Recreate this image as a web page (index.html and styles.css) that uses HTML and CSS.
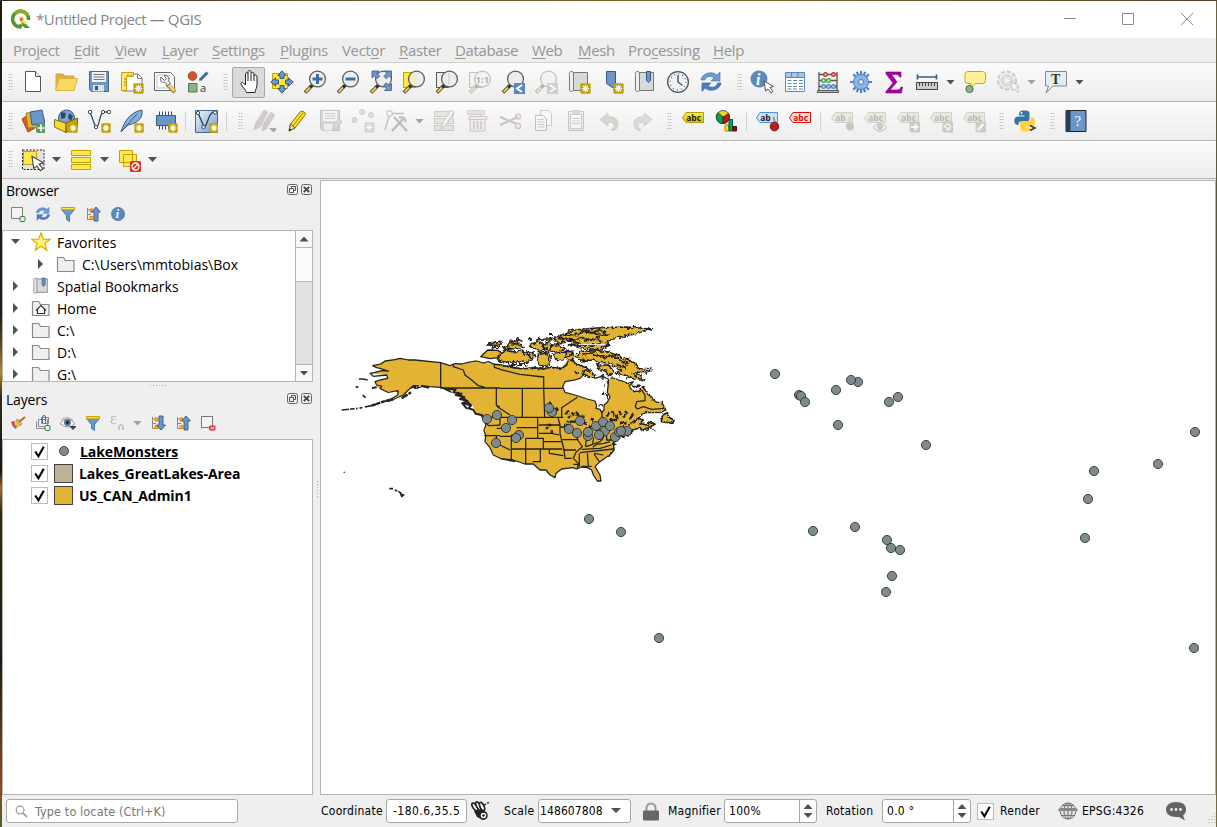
FILE: index.html
```html
<!DOCTYPE html>
<html lang="en">
<head>
<meta charset="utf-8">
<title>*Untitled Project — QGIS</title>
<link rel="stylesheet" href="styles.css">
</head>
<body>
<svg class="defs" width="0" height="0">
<defs>
<linearGradient id="gb" x1="0" y1="0" x2="1" y2="1"><stop offset="0" stop-color="#f5f9fd"/><stop offset="1" stop-color="#6d97c4"/></linearGradient>
<linearGradient id="gy" x1="0" y1="0" x2="0" y2="1"><stop offset="0" stop-color="#fff04d"/><stop offset="1" stop-color="#d8c000"/></linearGradient>
<symbol id="badge" viewBox="0 0 10 10"><rect x=".3" y=".3" width="9.4" height="9.4" rx="1.2" fill="#c4a000"/><path d="M5 1.6v6.8M1.6 5h6.8M2.7 2.7l4.6 4.6M7.3 2.7L2.7 7.3" stroke="#fff" stroke-width="1.1"/></symbol>
<symbol id="lens" viewBox="0 0 24 24"><path d="M2 22.500L10 14.500" stroke="#333" stroke-width="3.600"/><path d="M2.600 22L7 17.500" stroke="#fcce3a" stroke-width="2"/><circle cx="14.500" cy="9" r="7.900" fill="#eceded" stroke="#5c5c5c" stroke-width="1.300"/></symbol>
<symbol id="new" viewBox="0 0 24 24"><path d="M4.500 1.500h10l5 5v15h-15z" fill="#fff" stroke="#555"/><path d="M14.500 1.500v5h5" fill="#eee" stroke="#555"/></symbol>
<symbol id="open" viewBox="0 0 24 24"><path d="M2 20V4h7l2 2h9v4" fill="#dcb13c" stroke="#d5a937"/><path d="M1.500 20.500L5 8.500h18.500l-3.500 12z" fill="#fcd860" stroke="#dcb145"/></symbol>
<symbol id="save" viewBox="0 0 24 24"><path d="M2.500 1.500h19v20H4.500l-2-2z" fill="#6a96c8" stroke="#4a6784"/><path d="M5 2h14v10H5z" fill="#f4f4f4"/><path d="M6.500 4.500h11M6.500 7h11M6.500 9.500h11" stroke="#777"/><path d="M6 15h11v6.500H6z" fill="#dfe3e6"/><path d="M8 16h3v4H8z" fill="#375573"/></symbol>
<symbol id="layout" viewBox="0 0 24 24"><path d="M3 4h15l4 4v13H3z" fill="#fff" stroke="#777"/><path d="M17.500 4v4.500H22" fill="none" stroke="#777"/><path d="M1.500 2.500h12v4h-7v14h-5z" fill="#ffe680" stroke="#c4a000"/><path d="M4 9h2M4 12h2M4 15h2M8 4v2M11 4v2" stroke="#a58500"/><use href="#badge" x="13" y="13" width="11" height="11"/></symbol>
<symbol id="manager" viewBox="0 0 24 24"><path d="M1.500 2.500h16l4 4v14h-20z" fill="#fff" stroke="#666"/><path d="M4 5h12v13H4z" fill="#fff" stroke="#b6c5dc"/><path d="M14 14l8 8" stroke="#a07d20" stroke-width="4"/><path d="M15 14.500l6.500 6.500" stroke="#f6d873" stroke-width="2.500"/><path d="M8 7l3.500 3.500 2-2L11 5.500c3-1 6 2 4.500 5l2 3-3 2-2.500-3C8 13 6.500 10 8 7z" fill="#eee" stroke="#666"/></symbol>
<symbol id="style" viewBox="0 0 24 24"><circle cx="6.500" cy="6" r="4.300" fill="#cb552d" stroke="#ac4823"/><path d="M21.500 2.500L14 10" stroke="#3e6c9d" stroke-width="3"/><path d="M12.500 11l2-3 1.500 1.500z" fill="#3e6c9d"/><path d="M2.500 13.500H11V22H2.500z" fill="#8ab38a" stroke="#4c7c4c"/><text x="14" y="22" class="glyph" font-size="11" fill="#333">a</text></symbol>
<symbol id="hand" viewBox="0 0 24 24"><path d="M8.500 22.500c-1-2.500-3-4.500-5-7.500-1.500-2.500.5-3.500 2-2l2 2V4c0-2 2.500-2 2.500 0V2c0-2 3-2 3 0v1.500c.5-1.500 3-1.500 3 .5v1.500c1-1 3-.5 3 1.500v8c0 3-1.500 4-2 7.500z" fill="#fff" stroke="#222"/><path d="M10 4v7M13 4v7M16 5v6" stroke="#222"/></symbol>
<symbol id="panto" viewBox="0 0 24 24"><path d="M2.500 3.500h15v15h-15z" fill="#ffe736" stroke="#c4a000"/><path d="M12 .8l4.200 4.700h-2.200v3h-4v-3H7.800zM12 23.200l4.200-4.700h-2.200v-3h-4v3H7.800zM.8 12l4.700-4.200V10h3v4h-3v2.200zM23.200 12l-4.700-4.200V10h-3v4h3v2.200z" fill="#6a96c8" stroke="#365c84"/></symbol>
<symbol id="zin" viewBox="0 0 24 24"><use href="#lens" width="24" height="24"/><path d="M14.500 4v10M9.500 9h10" stroke="#3e6c9d" stroke-width="3"/></symbol>
<symbol id="zout" viewBox="0 0 24 24"><use href="#lens" width="24" height="24"/><path d="M9.500 9h10" stroke="#3e6c9d" stroke-width="3"/></symbol>
<symbol id="zfull" viewBox="0 0 24 24"><use href="#lens" width="24" height="24"/><path d="M3 1h7L7.800 3.200l3 3-2.500 2.500-3-3L3 8zM22.500 1v7l-2.200-2.200-3 3-2.500-2.500 3-3L15.500 1zM22.500 20.500h-7l2.200-2.200-3-3 2.500-2.500 3 3 2.300-2.300z" fill="#6a96c8" stroke="#365c84" stroke-width=".8"/></symbol>
<symbol id="zsel" viewBox="0 0 24 24"><path d="M1.500 2.500h12v15h-12z" fill="#ffe93b" stroke="#c4a000"/><use href="#lens" width="24" height="24"/><path d="M14 2.500a7 7 0 0 0 0 13z" fill="#f4efb0"/></symbol>
<symbol id="zlay" viewBox="0 0 24 24"><path d="M1.500 2.500h12v15h-12z" fill="#eee" stroke="#555"/><use href="#lens" width="24" height="24"/><path d="M14 3v12" stroke="#ccc"/></symbol>
<symbol id="znat" viewBox="0 0 24 24"><path d="M1.500 2.500h12v15h-12z" fill="#eee" stroke="#555"/><use href="#lens" width="24" height="24"/><text x="7.500" y="12.500" class="glyph b" font-size="9.500" fill="#222">1:1</text></symbol>
<symbol id="zprev" viewBox="0 0 24 24"><use href="#lens" width="24" height="24"/><path d="M13 13h11v11H13z" fill="#5b89bd"/><path d="M21 15l-5 3.500 5 3.500" fill="none" stroke="#fff" stroke-width="2"/></symbol>
<symbol id="znext" viewBox="0 0 24 24"><use href="#lens" width="24" height="24"/><path d="M13 13h11v11H13z" fill="#888"/><path d="M16 15l5 3.500-5 3.500" fill="none" stroke="#fff" stroke-width="2"/></symbol>
<symbol id="map" viewBox="0 0 24 24"><path d="M5 2.500h15.500v18H5z" fill="#d9d9d9" stroke="#777"/><path d="M5 1.500c-3 0-3 2-2.500 4v14.500c0 2 4 2 4 0V4c0-2-.5-2.500-1.500-2.500z" fill="#eee" stroke="#777"/></symbol>
<symbol id="newmap" viewBox="0 0 24 24"><use href="#map" width="24" height="24"/><use href="#badge" x="13" y="13" width="11" height="11"/></symbol>
<symbol id="newbm" viewBox="0 0 24 24"><path d="M6.500 1.500h9v18l-4.500-3-4.500-3z" fill="#6a96c8" stroke="#365c84"/><use href="#badge" x="13" y="13" width="11" height="11"/></symbol>
<symbol id="bm" viewBox="0 0 24 24"><use href="#map" width="24" height="24"/><path d="M13.500 1.500h4v9l-2 2-2-2z" fill="#6a96c8" stroke="#365c84"/></symbol>
<symbol id="clock" viewBox="0 0 24 24"><circle cx="12" cy="12" r="10.400" fill="#f0f1f2" stroke="#555" stroke-width="1.300"/><circle cx="12" cy="12" r="8" fill="none" stroke="#5080b0" stroke-width="1.500" stroke-dasharray="1 3.190"/><path d="M12 5v7l4.500 3.500" fill="none" stroke="#555" stroke-width="1.500"/></symbol>
<symbol id="refresh" viewBox="0 0 24 24"><path d="M2 10c.5-6 10-10 16-5l3-3v9h-9l3-3c-4-3-9-1-9 2z" fill="#6a9bd3" stroke="#4778b0" stroke-width=".7"/><path d="M22 13c-.5 6-10 10-16 5l-3 3.500V13h9l-3 3c4 2.500 9 1 9.500-3z" fill="#4b7fbb" stroke="#376aa1" stroke-width=".7"/></symbol>
<symbol id="cursor" viewBox="0 0 12 14"><path d="M1 1l1.500 10 2.500-2 3 4 2-1.500-3-4 3.500-1z" fill="#fff" stroke="#444" stroke-width=".9"/></symbol>
<symbol id="ident" viewBox="0 0 24 24"><circle cx="9" cy="9" r="8.500" fill="#5b89bd" /><text x="6" y="14.500" font-size="16" class="ser" fill="#fff">i</text><use href="#cursor" x="13" y="10" width="12" height="14"/></symbol>
<symbol id="table" viewBox="0 0 24 24"><path d="M2.500 2.500h19v19h-19z" fill="#fff" stroke="#5b89bd"/><path d="M3 3h18v4H3z" fill="#a9c5e6"/><path d="M3 7.500h18M8.500 3v4M15 3v4M4.500 10.500h4M10 10.500h4M16 10.500h4M4.500 13.500h4M10 13.500h4M16 13.500h4M4.500 16.500h4M10 16.500h4M16 16.500h4M4.500 19h4M10 19h4M16 19h4" stroke="#5b89bd"/></symbol>
<symbol id="abacus" viewBox="0 0 24 24"><path d="M3 2v19M21 2v19M3 4.500h18M3 10.500h18M3 16.500h18" stroke="#555" stroke-width="1.300"/><path d="M1.500 20.500h21v2h-21z" fill="#bbb" stroke="#555"/><g stroke-width="1.200"><g fill="#f5a3a3" stroke="#c32f2f"><circle cx="9.500" cy="4.500" r="1.900"/><circle cx="17.500" cy="4.500" r="1.900"/></g><g fill="#c1edc1" stroke="#3ca03c"><circle cx="7.500" cy="10.500" r="1.900"/><circle cx="12.500" cy="10.500" r="1.900"/></g><g fill="#b5d0ef" stroke="#4a80b8"><circle cx="7.500" cy="16.500" r="1.900"/><circle cx="12.500" cy="16.500" r="1.900"/><circle cx="17.500" cy="16.500" r="1.900"/></g></g></symbol>
<symbol id="gear" viewBox="0 0 24 24"><path d="M12 1v22M1 12h22M4.200 4.200l15.600 15.600M19.800 4.200L4.200 19.800M7.800 1.800l8.400 20.400M16.200 1.800L7.800 22.200" stroke="#4a84c8" stroke-width="2.200"/><circle cx="12" cy="12" r="7.500" fill="#8db4e4" stroke="#4a84c8"/><circle cx="12" cy="12" r="2.500" fill="#eee" stroke="#3c78bc"/></symbol>
<symbol id="sigma" viewBox="0 0 24 24"><path d="M4 2h15v5h-1.500c-.5-2-1.500-2.500-4-2.500H9.500l5.500 7.500-7 8h7c2.500 0 3.500-1 4-3h1.500l-1 6H4v-1.500l7-8.500L4 4z" fill="#a500a5" stroke="#820082" stroke-width=".6"/></symbol>
<symbol id="ruler" viewBox="0 0 24 24"><path d="M2 7h20M2.500 4.500v5M21.500 4.500v5" stroke="#3a5f85" stroke-width="1.700"/><path d="M1.500 12.500h21v7h-21z" fill="#ccc" stroke="#444"/><path d="M4.500 13v3M7.500 13v3M10.500 13v3M13.500 13v3M16.500 13v3M19.500 13v3" stroke="#444"/></symbol>
<symbol id="tip" viewBox="0 0 24 24"><path d="M5 1.500h14.500q3 0 3 3v6q0 3-3 3H12L6.500 20 8 13.500H5q-3 0-3-3v-6q0-3 3-3z" fill="#fdf19a" stroke="#cba700"/><circle cx="6.500" cy="19" r="3.600" fill="#88b588" stroke="#446a44"/></symbol>
<symbol id="action" viewBox="0 0 24 24"><circle cx="11" cy="10.500" r="9" fill="#ddd" stroke="#777" stroke-width="2" stroke-dasharray="4 2"/><circle cx="11" cy="10.500" r="5.500" fill="#bbb" stroke="#777"/><path d="M9.500 8l4.500 2.500-4.500 2.500z" fill="#fff"/><use href="#cursor" x="14" y="10" width="11" height="14"/></symbol>
<symbol id="textnote" viewBox="0 0 24 24"><path d="M1.500 1.500h21v14.500H9l-7 7 2.500-7h-3z" fill="#e6eef1" stroke="#888"/><text x="7" y="13.500" class="ser2 b" font-size="14" fill="#333">T</text></symbol>
<symbol id="dsm" viewBox="0 0 24 24"><path d="M1 10l6-4 7 13-7 4z" fill="#d95e20" stroke="#a84312"/><path d="M5 4l11-1v15l-9 1z" fill="#e5b53a" stroke="#b08319"/><path d="M9 3l12-2 3 13-13 2z" fill="#6a96c8" stroke="#365c84"/><rect x="15" y="14" width="10" height="10" rx="2" fill="#5a9960"/><path d="M20 15.500v7M16.500 19h7" stroke="#fff" stroke-width="1.700"/></symbol>
<symbol id="gpkg" viewBox="0 0 24 24"><circle cx="12.500" cy="9" r="8" fill="#7fa6d3" stroke="#36587e"/><path d="M7 3l5 1-1 5-4 1zM15 4l4 3-2 5-3-3z" fill="#2d4866"/><path d="M.5 10.500L12 14v9.500L.5 18z" fill="#f8dc2d" stroke="#5e4c00" stroke-width=".8"/><path d="M12 14l11.500-5v9L12 23.500z" fill="#d2a800" stroke="#5e4c00" stroke-width=".8"/><use href="#badge" x="14" y="14" width="10" height="10"/></symbol>
<symbol id="vec" viewBox="0 0 24 24"><path d="M3 3l6 16c4-1 3-16 8-16h4" fill="none" stroke="#34495e" stroke-width="1.300"/><g fill="#fff" stroke="#34495e"><circle cx="3" cy="3" r="1.700"/><circle cx="9" cy="18" r="1.700"/><circle cx="16" cy="3" r="1.700"/><circle cx="22" cy="3" r="1.700"/></g></symbol>
<symbol id="newvec" viewBox="0 0 24 24"><use href="#vec" width="24" height="24"/><use href="#badge" x="14" y="14" width="10" height="10"/></symbol>
<symbol id="feather" viewBox="0 0 24 24"><path d="M1 23C4 13 10 3 22 1c1 7-3 13-14 15z" fill="#84afd8" stroke="#365c84"/><path d="M1 23L17 5" stroke="#365c84"/><use href="#badge" x="14" y="14" width="10" height="10"/></symbol>
<symbol id="chip" viewBox="0 0 24 24"><path d="M5.500 2.500v18M8.500 2.500v18M11.500 2.500v18M14.500 2.500v18M17.500 2.500v18" stroke="#2e4d70"/><path d="M2.500 6.500h19v10h-19z" fill="#6a96c8" stroke="#365c84"/><use href="#badge" x="14" y="14" width="10" height="10"/></symbol>
<symbol id="virt" viewBox="0 0 24 24"><path d="M1.500 1.500h22v22h-22z" fill="url(#gb)" stroke="#46698f"/><path d="M4 4l6 14c4-1 4-15 10-15" fill="none" stroke="#2d4866" stroke-width="1.400"/><g fill="#fff" stroke="#2d4866"><circle cx="4" cy="4" r="1.700"/><circle cx="9.500" cy="18" r="1.700"/><circle cx="21" cy="3.500" r="1.700"/></g><use href="#badge" x="15" y="14" width="10" height="10"/></symbol>
<symbol id="pencil" viewBox="0 0 24 24"><path d="M4 22l1.500-7L15.500 2.500q4-1 5 3L10 19z" fill="#f8dc2d" stroke="#8c7400"/><path d="M8 17L18 4" stroke="#a58a00"/><path d="M4 22l1.500-7 4.500 4z" fill="#eee2a0" stroke="#555"/><path d="M4 22l.8-2.500 1.500 1z" fill="#111"/></symbol>
<symbol id="pencils" viewBox="0 0 24 24"><path d="M2 21l1.500-7L12 1l4 2-8 15zM10 22l1-7L19 3l4 3-9 14z" fill="#8c7777" stroke="#8b8585"/><path d="M17 19h9l-4.500 4.500z" fill="#111"/></symbol>
<symbol id="saveed" viewBox="0 0 24 24"><path d="M2.500 1.500h19v20H4.500l-2-2z" fill="#999" stroke="#666"/><path d="M5 2h14v10H5z" fill="#f4f4f4"/><path d="M6.500 4.500h11M6.500 7h11M6.500 9.500h11" stroke="#777"/><path d="M6 15h9v6.500H6z" fill="#dfe3e6"/><path d="M14 22l2-7 6-5 2 3-6 7z" fill="#b99" stroke="#777"/></symbol>
<symbol id="points" viewBox="0 0 24 24"><g fill="#aaa" stroke="#777"><circle cx="3.500" cy="11" r="2.500"/><circle cx="11" cy="3" r="2.500"/><circle cx="20" cy="6" r="2.500"/></g><rect x="13.500" y="13.500" width="10" height="10" rx="1" fill="#999"/><path d="M18.500 15v7M15 18.500h7M16 16l5 5M21 16l-5 5" stroke="#fff"/></symbol>
<symbol id="vertex" viewBox="0 0 24 24"><path d="M5.500 6L1 21M6 4.500h14" stroke="#555" stroke-width="1.300"/><path d="M3 2h5v5H3z" fill="#fff" stroke="#555"/><path d="M8 22L20 9M10 8l13 14M15 8l5 1 2 4" fill="none" stroke="#555" stroke-width="2.500"/></symbol>
<symbol id="attr" viewBox="0 0 24 24"><path d="M2.500 2.500h19v5h-19zM2.500 9.500h19v5h-19zM2.500 16.500h19v5h-19z" fill="#ccc9a4" stroke="#777"/><path d="M9 20l2-7 8-12 3 2-8 13z" fill="#eee" stroke="#666"/></symbol>
<symbol id="trash" viewBox="0 0 24 24"><path d="M2.500 1.500h17v4h-17z" fill="#c8b8a8" stroke="#888"/><path d="M5 10.500h15v11.500H5zM4 7.500h18v3H4zM10 5.500h6v2" fill="#ddd" stroke="#906464"/><path d="M9 12v8M12.500 12v8M16 12v8" stroke="#906464" stroke-width="1.500"/></symbol>
<symbol id="cut" viewBox="0 0 24 24"><path d="M2 8l17 7M2 16L20 8" stroke="#666" stroke-width="2"/><circle cx="20" cy="7.500" r="2.500" fill="none" stroke="#966" stroke-width="1.500"/><circle cx="20" cy="17" r="2.500" fill="none" stroke="#966" stroke-width="1.500"/></symbol>
<symbol id="copy" viewBox="0 0 24 24"><path d="M9.500 1.500h8l3 3v12h-11z" fill="#fff" stroke="#777"/><path d="M4.500 6.500h8l3 3v12h-11z" fill="#fff" stroke="#555"/><path d="M6.500 10.500h6M6.500 13h7M6.500 15.500h7M6.500 18h7" stroke="#777"/></symbol>
<symbol id="paste" viewBox="0 0 24 24"><path d="M4.500 2.500h15v19h-15z" fill="#ddd" stroke="#666"/><path d="M6.500 5.500h11v14h-11z" fill="#fff" stroke="#777"/><path d="M8.500 1h7v4h-7z" fill="#999"/><path d="M8 9.500h8M8 12h8M8 14.500h8" stroke="#777"/></symbol>
<symbol id="undo" viewBox="0 0 24 24"><path d="M11 4v4c8-1 12 4 9 11-1 2-4 3-6 2 4-2 5-8-3-8v4L3 10.500z" fill="#a69384" stroke="#8d7c70"/></symbol>
<symbol id="redo" viewBox="0 0 24 24"><path d="M14 4v4C6 7 2 12 5 19c1 2 4 3 6 2-4-2-5-8 3-8v4l8-6.500z" fill="#9fa99a" stroke="#7d8b7b"/></symbol>
<symbol id="lab" viewBox="0 0 24 24"><path d="M1.500 9L5 3.500h17.500v10H5z" fill="url(#gy)" stroke="#b59b00"/><text x="5.200" y="11.500" class="glyph b" font-size="8.500" fill="#222">abc</text></symbol>
<symbol id="diagram" viewBox="0 0 24 24"><circle cx="8" cy="8" r="6.500" fill="#f2d817" stroke="#222" stroke-width=".7"/><path d="M8 8L3 3.500A6.500 6.500 0 0 0 8 14.500z" fill="#00a843" stroke="#222" stroke-width=".7"/><path d="M8 8l5.500-3.500A6.500 6.500 0 0 1 8 14.500z" fill="#c31616" stroke="#222" stroke-width=".7"/><path d="M10 16h3.500v6H10z" fill="#fddd00" stroke="#b98e00"/><path d="M14 10.500h3.500V22H14z" fill="#00a843" stroke="#055"/><path d="M18 17.500h3.500V22H18z" fill="#a00" stroke="#600"/></symbol>
<symbol id="labpin" viewBox="0 0 24 24"><path d="M1.500 9L5 3.500h17.500v10H5z" fill="#cfe3f8" stroke="#4e93da"/><text x="5.200" y="11.500" class="glyph b" font-size="8.500" fill="#222">ab</text><path d="M18.500 8l1.500 6" stroke="#999" stroke-width="2"/><circle cx="19.500" cy="17.500" r="4.300" fill="#b02323" stroke="#7c1212"/></symbol>
<symbol id="labred" viewBox="0 0 24 24"><path d="M1.500 9L5 3.500h17.500v10H5z" fill="#ffe6e6" stroke="#f00000"/><text x="5.200" y="11.500" class="glyph b" font-size="8.500" fill="#f00000">abc</text></symbol>
<symbol id="labg" viewBox="0 0 24 24"><path d="M1.500 9L5 3.500h17.500v10H5z" fill="#cfcfae" stroke="#888872"/><text x="5.200" y="11.500" class="glyph b" font-size="8.500" fill="#333">abc</text></symbol>
<symbol id="lg1" viewBox="0 0 24 24"><path d="M1.500 9L5 3.500h17.500v10H5z" fill="#cfcfae" stroke="#888872"/><text x="5.200" y="11.500" class="glyph b" font-size="8.500" fill="#333">ab</text><path d="M19.500 8v7" stroke="#999" stroke-width="2.500"/><circle cx="20" cy="17.500" r="4" fill="#8d6464"/></symbol>
<symbol id="lg2" viewBox="0 0 24 24"><use href="#labg" width="24" height="24"/><path d="M10 18.500q7-8 14 0q-7 8-14 0z" fill="#eee" stroke="#555"/><circle cx="17" cy="18" r="3" fill="#777"/></symbol>
<symbol id="lg3" viewBox="0 0 24 24"><use href="#labg" width="24" height="24"/><rect x="13.500" y="12.500" width="11" height="11" rx="2" fill="#777"/><path d="M15 18h6M18.500 15l3 3-3 3" stroke="#fff" stroke-width="2" fill="none"/></symbol>
<symbol id="lg4" viewBox="0 0 24 24"><use href="#labg" width="24" height="24"/><rect x="13.500" y="12.500" width="11" height="11" rx="2" fill="#777"/><path d="M16 19c-1-5 6-5 5.500-1-.5 2-2 3-3 3M18 18v3.500" stroke="#fff" stroke-width="1.500" fill="none"/></symbol>
<symbol id="lg5" viewBox="0 0 24 24"><use href="#labg" width="24" height="24"/><rect x="13.500" y="12.500" width="11" height="11" rx="2" fill="#888064"/><path d="M15.500 21.500l6-6.500" stroke="#fff" stroke-width="2.500"/></symbol>
<symbol id="py" viewBox="0 0 24 24"><path d="M6 6.500c0-3 0-5 5.500-5s5 2 5 4v4c0 2-1 3-3 3H8c-2 0-2.500 1-2.500 3.500C2 16 1 14 1.500 10.500 2 8 3.500 7.500 6 7.500h5.500v-1z" fill="#3774a6"/><path d="M18 8c3 0 4 2 4 5s-1.500 4.500-4 4.500h-5.500v1h5c0 2.500-1 4-5 4s-5.500-2-5.500-4v-4c0-1.500 1-2.500 3-2.500h5.500c2 0 2.500-1 2.500-4z" fill="#ffd43b"/><circle cx="8.500" cy="4" r="1" fill="#fff"/><path d="M17 16.500l5 2.500-5 2.500" fill="none" stroke="#333" stroke-width="1.500"/></symbol>
<symbol id="book" viewBox="0 0 24 24"><path d="M2 1.500h20v21H2z" fill="#6a96c8" stroke="#222"/><path d="M2 1.500h4.500v21H2z" fill="#2b3e50"/><text x="10.500" y="17" class="ser2" font-size="15" fill="#fff">?</text></symbol>
<symbol id="selrect" viewBox="0 0 24 24"><path d="M1.500 2h21.500v19.500H1.500z" fill="#e2e2e2" stroke="#222" stroke-dasharray="2 1.500"/><path d="M2.500 3.500h13v13h-13z" fill="#ffe94f" stroke="#c4a000"/><use href="#cursor" x="9" y="7" width="16" height="17"/></symbol>
<symbol id="selall" viewBox="0 0 24 24"><path d="M2.500 2.500h19v5h-19zM2.500 9.500h19v5h-19zM2.500 16.500h19v5h-19z" fill="#fce94f" stroke="#c4a000"/></symbol>
<symbol id="desel" viewBox="0 0 24 24"><path d="M2.500 2.500h13v12h-13zM6.500 6.500h13v12h-13z" fill="#fce94f" stroke="#c4a000"/><rect x="13" y="13" width="11" height="11" rx="1.500" fill="#d83232"/><circle cx="18.500" cy="18.500" r="3.500" fill="none" stroke="#fff" stroke-width="1.300"/><path d="M16 21l5-5" stroke="#fff" stroke-width="1.300"/></symbol>
<symbol id="restore" viewBox="0 0 11 11"><rect x=".5" y=".5" width="10" height="10" rx="2" fill="none" stroke="#666"/><path d="M2.500 4.500h4v4h-4zM4.500 4.500v-2h4v4h-2" fill="none" stroke="#555"/></symbol>
<symbol id="close" viewBox="0 0 11 11"><rect x=".5" y=".5" width="10" height="10" rx="2" fill="none" stroke="#666"/><path d="M2.800 2.800l5.400 5.400M8.200 2.800L2.800 8.200" stroke="#444" stroke-width="1.900"/></symbol>
<symbol id="addl" viewBox="0 0 16 16"><path d="M1.500 1.500h11v11h-11z" fill="#f3f3f3" stroke="#7b837b"/><rect x="10" y="10.500" width="5" height="5" rx="1" fill="#ddf0dd" stroke="#3f8043"/></symbol>
<symbol id="funnel" viewBox="0 0 16 16"><path d="M1.500 3.500h13l-5 6v6l-3-2v-4z" fill="#6a96c8" stroke="#4779ad"/><path d="M1.500 1.500h13v2.300h-13z" fill="#fce94f" stroke="#c4a000"/></symbol>
<symbol id="tree" viewBox="0 0 16 16"><path d="M2.500 2v11.500H6M2.500 4H6M2.500 8.500H6" fill="none" stroke="#888"/><path d="M5 3h3v3H5zM5 10.500h3v3H5z" fill="#ffae42" stroke="#f08010"/></symbol>
<symbol id="treeup" viewBox="0 0 16 16"><use href="#tree" width="16" height="16"/><path d="M11 1l4.500 5H13v9H9V6H6.500z" fill="#6a96c8" stroke="#365c84" stroke-width=".9"/></symbol>
<symbol id="treedn" viewBox="0 0 16 16"><use href="#tree" width="16" height="16"/><path d="M11 15l4.500-5H13V1H9v9H6.500z" fill="#6a96c8" stroke="#365c84" stroke-width=".9"/></symbol>
<symbol id="info" viewBox="0 0 16 16"><circle cx="8" cy="8" r="6.700" fill="#5b89bd" stroke="#3f6fa5" stroke-width=".5"/><text x="5.800" y="12.200" font-size="12" class="ser" fill="#fff">i</text></symbol>
<symbol id="fold" viewBox="0 0 20 18"><path d="M1.500 16.500v-14h6l2 3h8.500v11z" fill="#efefef" stroke="#8a8a8a" stroke-width="1.200"/></symbol>
<symbol id="homef" viewBox="0 0 20 18"><use href="#fold" width="20" height="18"/><path d="M5 11.500l5-5 5 5M6.500 10.500v4h7v-4" fill="#fff" stroke="#333" stroke-width="1.200"/></symbol>
<symbol id="star" viewBox="0 0 20 20"><path d="M10 .8l2.300 6.400 7 .1-5.500 4.200 2 6.700L10 14.200l-5.800 4 2-6.700L.7 7.300l7-.1z" fill="#fff27a" stroke="#d4b100" stroke-width="1.200"/></symbol>
<symbol id="brush" viewBox="0 0 16 16"><path d="M1 7l6-2 4 5-5 4z" fill="#f8c840"/><path d="M1 7l3-1 2 8-3-2z" fill="#e84040"/><path d="M3 11l4-1-1 4z" fill="#4a8ad8"/><path d="M6 5l2-1 4 5-2 2z" fill="#e8c690" stroke="#a5712c" stroke-width=".7"/><path d="M9 7l6-5" stroke="#b06b1a" stroke-width="2"/></symbol>
<symbol id="group" viewBox="0 0 16 16"><path d="M1.500 6.500v7h10M3.500 4.500v7h9v-7zM6.500 2.500v6h7v-6z" fill="none" stroke="#888"/><path d="M7.500 8V2a1.500 1.500 0 0 1 3 0v7" fill="none" stroke="#44719d"/><rect x="10" y="10.500" width="5" height="5" rx="1" fill="#ddf0dd" stroke="#3f8043"/></symbol>
<symbol id="eye" viewBox="0 0 16 16"><path d="M0 8.500q7-9 15 0q-7 7-15 0z" fill="#f6f6f6" stroke="#999"/><path d="M1 5q6-5 12 0" fill="none" stroke="#aaa"/><circle cx="7.500" cy="7.500" r="3.400" fill="#4a729c"/><circle cx="7.500" cy="7.500" r="1.300" fill="#111"/><path d="M9 11h8l-4 4z" fill="#444"/></symbol>
<symbol id="eps" viewBox="0 0 16 16"><text x="0" y="9" class="ser2" font-size="16" fill="#444">ε</text><path d="M8 15v-4q3-4 6 0v4h-2v-4h-2v4z" fill="#777"/></symbol>
<symbol id="reml" viewBox="0 0 16 16"><path d="M1.500 1.500h11v11h-11z" fill="#f3f3f3" stroke="#777"/><rect x="9" y="10.500" width="6.500" height="5" rx="1" fill="#e04545"/><path d="M10.500 13h3.500" stroke="#fff"/></symbol>
<symbol id="check" viewBox="0 0 16 16"><path d="M.5.5h15v15H.5z" fill="#fff" stroke="#bcbcbc"/><path d="M4 8l3 4.500L12 3.500" fill="none" stroke="#000" stroke-width="2"/></symbol>
</defs>
</svg>
<div class="window">
  <header class="titlebar">
    <svg class="logo" viewBox="0 0 20 20"><path d="M10.500 15.500l-1.500 2.500A8 8 0 1 1 17.500 11" fill="none" stroke="#589632" stroke-width="3.600"/><path d="M4 5a8 8 0 0 1 13 2" fill="none" stroke="#8cb02c" stroke-width="3.600"/><path d="M11 11l8 8h-5.500L10.500 15z" fill="#589632"/><path d="M8.500 8.500h4l-.5 4h-3z" fill="#ee7913"/><path d="M11.500 11.500l3 3" stroke="#f0e64a" stroke-width="2.500"/></svg>
    <span class="title">*Untitled Project — QGIS</span>
    <svg class="controls" viewBox="0 0 140 20"><path d="M1 9.500h12M59.500 4.500h11v11h-11zM118 4l12 12M130 4l-12 12" fill="none" stroke="#8c8c8c"/></svg>
  </header>
  <nav class="menu">
    <span>Pro<u>j</u>ect</span><span><u>E</u>dit</span><span><u>V</u>iew</span><span><u>L</u>ayer</span><span><u>S</u>ettings</span><span><u>P</u>lugins</span><span>Vect<u>o</u>r</span><span><u>R</u>aster</span><span><u>D</u>atabase</span><span><u>W</u>eb</span><span><u>M</u>esh</span><span>Pro<u>c</u>essing</span><span><u>H</u>elp</span>
  </nav>
  <div class="toolbar">
    <i class="grip"></i>
    <b class="btn"><svg><use href="#new"/></svg></b><b class="btn"><svg><use href="#open"/></svg></b><b class="btn"><svg><use href="#save"/></svg></b><b class="btn"><svg><use href="#layout"/></svg></b><b class="btn"><svg><use href="#manager"/></svg></b><b class="btn"><svg><use href="#style"/></svg></b>
    <i class="grip mid"></i>
    <b class="btn on"><svg><use href="#hand"/></svg></b><b class="btn"><svg><use href="#panto"/></svg></b><b class="btn"><svg><use href="#zin"/></svg></b><b class="btn"><svg><use href="#zout"/></svg></b><b class="btn"><svg><use href="#zfull"/></svg></b><b class="btn"><svg><use href="#zsel"/></svg></b><b class="btn"><svg><use href="#zlay"/></svg></b><b class="btn off"><svg><use href="#znat"/></svg></b><b class="btn"><svg><use href="#zprev"/></svg></b><b class="btn off"><svg><use href="#znext"/></svg></b><b class="btn"><svg><use href="#newmap"/></svg></b><b class="btn"><svg><use href="#newbm"/></svg></b><b class="btn"><svg><use href="#bm"/></svg></b><b class="btn"><svg><use href="#clock"/></svg></b><b class="btn"><svg><use href="#refresh"/></svg></b>
    <i class="grip tight"></i>
    <b class="btn"><svg><use href="#ident"/></svg></b><b class="btn"><svg><use href="#table"/></svg></b><b class="btn"><svg><use href="#abacus"/></svg></b><b class="btn"><svg><use href="#gear"/></svg></b><b class="btn"><svg><use href="#sigma"/></svg></b><b class="btn"><svg><use href="#ruler"/></svg></b><i class="drop"></i><b class="btn"><svg><use href="#tip"/></svg></b><b class="btn off"><svg><use href="#action"/></svg></b><i class="drop off"></i><b class="btn"><svg><use href="#textnote"/></svg></b><i class="drop"></i>
  </div>
  <div class="toolbar">
    <i class="grip"></i>
    <b class="btn"><svg><use href="#dsm"/></svg></b><b class="btn"><svg><use href="#gpkg"/></svg></b><b class="btn"><svg><use href="#newvec"/></svg></b><b class="btn"><svg><use href="#feather"/></svg></b><b class="btn chip"><svg><use href="#chip"/></svg></b><i class="sep"></i><b class="btn"><svg><use href="#virt"/></svg></b><i class="sep"></i>
    <i class="grip edit"></i>
    <b class="btn off"><svg><use href="#pencils"/></svg></b><b class="btn"><svg><use href="#pencil"/></svg></b><b class="btn off"><svg><use href="#saveed"/></svg></b><b class="btn off"><svg><use href="#points"/></svg></b><b class="btn off"><svg><use href="#vertex"/></svg></b><i class="drop off"></i><b class="btn off"><svg><use href="#attr"/></svg></b><b class="btn off"><svg><use href="#trash"/></svg></b><b class="btn off"><svg><use href="#cut"/></svg></b><b class="btn off"><svg><use href="#copy"/></svg></b><b class="btn off"><svg><use href="#paste"/></svg></b><b class="btn off"><svg><use href="#undo"/></svg></b><b class="btn off"><svg><use href="#redo"/></svg></b>
    <i class="grip label"></i>
    <b class="btn"><svg><use href="#lab"/></svg></b><b class="btn chart"><svg><use href="#diagram"/></svg></b><i class="sep"></i><b class="btn"><svg><use href="#labpin"/></svg></b><b class="btn"><svg><use href="#labred"/></svg></b><i class="sep wide"></i><b class="btn off"><svg><use href="#lg1"/></svg></b><b class="btn off"><svg><use href="#lg2"/></svg></b><b class="btn off"><svg><use href="#lg3"/></svg></b><b class="btn off"><svg><use href="#lg4"/></svg></b><b class="btn off"><svg><use href="#lg5"/></svg></b>
    <i class="grip plug"></i><b class="btn"><svg><use href="#py"/></svg></b><i class="grip plug"></i><b class="btn"><svg><use href="#book"/></svg></b>
  </div>
  <div class="toolbar last">
    <i class="grip"></i>
    <b class="btn"><svg><use href="#selrect"/></svg></b><i class="drop"></i><b class="btn"><svg><use href="#selall"/></svg></b><i class="drop"></i><b class="btn"><svg><use href="#desel"/></svg></b><i class="drop"></i>
  </div>
  <main class="work">
    <aside class="docks">
      <section class="dock browser">
        <div class="dock-title"><span>Browser</span><svg><use href="#restore"/></svg><svg><use href="#close"/></svg></div>
        <div class="dock-tools"><svg><use href="#addl"/></svg><svg><use href="#refresh"/></svg><svg><use href="#funnel"/></svg><svg><use href="#treeup"/></svg><svg><use href="#info"/></svg></div>
        <div class="tree">
          <ul>
            <li><i class="tw open"></i><svg class="star"><use href="#star"/></svg><span>Favorites</span></li>
            <li class="child"><i class="tw"></i><svg><use href="#fold"/></svg><span class="path">C:\Users\mmtobias\Box</span></li>
            <li><i class="tw"></i><svg><use href="#bm"/></svg><span>Spatial Bookmarks</span></li>
            <li><i class="tw"></i><svg><use href="#homef"/></svg><span>Home</span></li>
            <li><i class="tw"></i><svg><use href="#fold"/></svg><span>C:\</span></li>
            <li><i class="tw"></i><svg><use href="#fold"/></svg><span>D:\</span></li>
            <li><i class="tw"></i><svg><use href="#fold"/></svg><span>G:\</span></li>
          </ul>
          <div class="scroll"><i class="up"></i><i class="thumb"></i><i class="down"></i></div>
        </div>
      </section>
      <div class="split"></div>
      <section class="dock layers">
        <div class="dock-title"><span>Layers</span><svg><use href="#restore"/></svg><svg><use href="#close"/></svg></div>
        <div class="dock-tools"><svg><use href="#brush"/></svg><svg><use href="#group"/></svg><svg><use href="#eye"/></svg><svg><use href="#funnel"/></svg><svg class="dim"><use href="#eps"/></svg><i class="drop off"></i><svg><use href="#treedn"/></svg><svg><use href="#treeup"/></svg><svg><use href="#reml"/></svg></div>
        <div class="layer-list">
          <div class="layer"><svg class="ck"><use href="#check"/></svg><i class="swatch dot"></i><u>LakeMonsters</u></div>
          <div class="layer"><svg class="ck"><use href="#check"/></svg><i class="swatch lakes"></i><span>Lakes_GreatLakes-Area</span></div>
          <div class="layer"><svg class="ck"><use href="#check"/></svg><i class="swatch admin"></i><span>US_CAN_Admin1</span></div>
        </div>
      </section>
    </aside>
    <div class="vsplit"></div>
    <svg class="canvas" viewBox="321 181 894 613">
      <defs>
        <filter id="rough" x="-5%" y="-5%" width="110%" height="110%"><feTurbulence type="fractalNoise" baseFrequency=".12" numOctaves="2" seed="4"/><feDisplacementMap in="SourceGraphic" scale="9" xChannelSelector="R" yChannelSelector="G"/></filter>
        <filter id="craggy" x="-5%" y="-5%" width="110%" height="110%"><feTurbulence type="fractalNoise" baseFrequency=".08" numOctaves="3" seed="9"/><feDisplacementMap in="SourceGraphic" scale="18" xChannelSelector="R" yChannelSelector="G"/></filter>
      </defs>
      <!-- western half: Alaska, Yukon, BC, west coast -->
      <g transform="translate(335 315) scale(.33333)" stroke-linejoin="round">
        <path fill="#e3b333" d="M113 152L150 138 195 130 240 135 317 143 345 152 380 147 425 140 475 147 497 148 535 158H541V440L500 432 480 422 465 398 450 375 452 330 455 318 425 295 412 270 380 240 350 225 317 217 285 215 250 212 225 222 205 240 150 258 190 240 182 228 150 228 125 215 120 200 158 190 155 180 105 175 130 168 160 168z"/>
        <g fill="none" stroke="#232323" stroke-width="3.800">
          <path d="M541 158L497 150 475 147 460 140 445 144 425 138 400 142 380 147 360 146 345 152 317 143 240 135 220 135 195 130 180 134 150 138 138 147 113 152 125 158 135 160 160 168 140 167 120 172 105 175 115 184 155 180 158 190 140 194 120 200 125 210 140 213 135 220 150 228 160 232 182 228 190 228 188 240 172 250 150 258 165 258 205 240 220 225 235 212 250 212 245 220 265 213 285 215 317 217 345 226M450 315L452 332 447 345 452 362 450 380 465 398 475 420 500 432 541 440"/>
          <path d="M317 143V219H541M355 148V155L385 165 390 180 410 195 430 212 450 217M478 147V157L541 176M484 220V270L528 297M440 307H541M453 325L462 332 505 330M508 307V362M448 362H541M484 362V375L527 415M530 362V437M325 220L350 232"/>
          <path stroke-width="6" d="M340 222L362 224 355 232 380 236 362 240 388 246 375 252 398 258 385 264 408 272 400 280 415 284 422 296 440 300 450 310M380 262L396 282M368 232L410 272M125 217l-14 2M228 218l12-4 0 8M258 212l24 6"/>
          <path stroke-width="7" d="M110 272L150 258 175 253M200 250L212 240M208 245L228 232" stroke-dasharray="12 3"/>
          <path stroke-width="5" stroke-dasharray="22 4 13 4 5 6 9 7" d="M20 285L70 280 110 272 140 262"/>
          <path stroke-width="5" d="M72 192h12l14 3M62 215l8 2M83 240l9 8M163 521h11M179 525l8 3M190 529l9 6M28 470v3"/><path d="M196 536l11 4-7 5z" fill="#5f5536"/>
        </g>
        <path d="M437 125L458 105 488 106 508 118 490 128 466 131z" fill="#e3b333" stroke="#232323" stroke-width="4"/>
      </g>
      <g transform="translate(500 315) scale(.33333)" stroke-linejoin="round">
        <path fill="#e3b333" d="M0 150L70 160 130 158 185 160 200 138 215 130 225 145 250 155 275 180 250 185 225 195 195 200 188 215 195 232 225 240 262 252 285 258 290 272 300 283 305 292 312 285 312 270 322 262 330 245 322 232 325 205 330 187 350 192 385 205 396 201 388 215 400 230 418 228 428 215 445 240 470 262 485 262 498 285 480 293 440 292 420 300 405 315 400 325 415 310 430 315 420 325 440 330 452 324 465 328 445 338 425 345 418 338 400 345 395 355 375 362 358 368 340 378 338 395 342 405 320 425 300 440 285 455 300 480 303 498 292 498 280 480 275 465 262 458 245 456 230 462 218 458 200 460 185 462 168 475 165 488 150 480 138 465 120 465 100 447 75 447 40 435 0 430z"/>
        <g fill="none" stroke="#232323" stroke-width="3.800">
          <g filter="url(#rough)">
            <path stroke-width="5" d="M0 150L40 158 70 162 100 158 130 162 150 157 185 160 200 150 205 138 215 130 225 145 250 155 262 160 275 180"/>
            <path stroke-width="5" d="M400 325L415 310 430 315 420 325 440 330 452 320 465 328 445 338 425 345 418 338 400 345 385 362 358 368 350 378 340 382 342 405 325 425"/>
            <path d="M330 187L350 192 385 205 400 200 388 215 400 230 418 228 428 215 445 240 455 245 460 255 470 262 485 262 498 285 480 293 440 292 425 298 420 305 405 315 385 330"/>
          </g>
          <!-- Hudson Bay and James Bay -->
          <path fill="#fff" d="M252 178L240 190 225 195 195 200 188 215 195 232 225 240 262 252 285 258 290 272 288 280 300 283 305 292 312 285 312 270 322 262 330 245 322 232 325 205 325 192 305 184 285 190 275 182z"/>
          <path d="M325 422L300 440 285 455 300 480 303 498 292 498 280 480 275 465 262 458 245 456 230 462 218 458 200 460 185 462 168 475 165 488 150 480 138 465 120 465 100 447 75 447 40 435 0 430"/>
          <path d="M0 220H188M131 220V186L60 178 0 163M67 220V307M131 220L134 307M-55 307H190M185 307V278L232 247M306 290V325M425 225L435 240V257L410 260 406 275 412 282 430 275 455 283 492 280M0 297V330M-10 274L30 300"/>
          <path d="M113 307V370M117 330H180M50 338H113M117 355H155L178 360M34 360H60M34 360V435M34 402H187M77 370H130V402M77 370V447M130 380H187M121 402V440H98M148 402V415L190 422M174 307L180 330 180 355 192 405 195 430H215M-10 340H20M0 364H34M0 390L30 405"/>
          <path d="M180 336H205M187 374H235M190 405H228M225 355L235 378 247 395 228 412 220 430 235 445 232 460M238 415V455M262 415L265 452M282 417L298 440M240 413L340 402M245 403L300 400 335 390M260 370L256 395M281 368L278 388 257 395M281 387L300 380 310 370M320 362V375H352M278 397L290 388 312 385 330 380M220 448H240M245 454H275M352 345L356 368M370 330L375 355M282 415L310 420"/>
          <g stroke-width="7" filter="url(#rough)"><path d="M195 297l12-10M205 310l5-10M215 292l7 10M228 290l9 14M240 305l14 0M210 320h15M250 320l8 8M255 342h16M272 310l8 6M270 330v14M320 305l8-14M335 288l9 14M350 300l3 12M358 288l5 12M370 308l6-10M375 288l7 8M390 312l10-18M330 315h22M360 322l20 4M145 328l8 4M137 340l8-2M151 352l8-1M192 330h12M200 318l8 4M290 345l10-6M300 370l15-8M345 390l-8-8"/><circle cx="150" cy="269" r="3"/><circle cx="170" cy="283" r="3"/><circle cx="165" cy="295" r="2"/></g>
        </g>
        <g filter="url(#rough)" fill="#e3b333" stroke="#232323" stroke-width="5">
          <path d="M488 300L502 293 507 307 522 316 518 325 500 322 484 320z"/>
        </g>
        <g filter="url(#craggy)" fill="#e3b333" stroke="#232323" stroke-width="4.500">
          <path d="M-2 118L20 106 45 112 66 108 72 120 92 122 95 137 68 142 40 140 20 145-5 135zM228 125L240 110 260 107 315 108 350 120 385 135 408 148 415 160 450 165 440 174 405 170 420 182 430 197 395 190 350 175 362 165 340 152 330 145 295 142 280 135 245 138zM175 65L220 45 300 38 380 36 455 42 400 58 350 68 320 80 330 90 300 104 240 98 205 90 240 85 210 78z"/>
          <path d="M-40 90l30-10 20 4-15 7zM5 98l25-12 30 2 14 8-30 6zM30 80l20-6 15 3-16 6zM90 92l22-14 15 10 12 14-20 8-12-6zM80 108l20 6 8 10-18 2zM128 95l20-16 10 12-14 20zM148 92l30-4 16 14-20 10-20-4zM108 72l40-4 8 6-40 2zM160 68l25 4 10 10-22 3zM115 115l22-3 14 12-4 25-22 5-12-14zM160 120l30-8 20-6 8 10-28 18-20 3zM195 112l22-4 5 16-12 14-12-8zM290 143l10 10 22-4 12 8 5 18-16 8-5-14-22-6zM248 178l8-14 14 2 14 16-16 6z"/>
        </g>
        <g filter="url(#craggy)" fill="none" stroke="#232323" stroke-width="6">
          <path d="M195 60l40-2 10-10 30 6 25-10 15 9M185 72l36 4 25-8 25 8 25-10M230 90h50l25-4M265 50l42 10 22-3M290 75l20 6M250 120l30-5 25 10 28-2 30 12 22 12M245 130l20 8M350 148l30 12M410 185l-12-8M15 102h15M-25 98H-8M68 118l12-9M95 76l-10-5M150 57h10M310 92l20-6M25 150h55M100 160h28M240 170l-14 5"/>
          <path d="M430 215l5 10M308 178v10M320 195v8M310 230l12 22M312 212h2M395 212h14M408 218l8-9M300 268l6 6M435 345l15-7M463 345h3M425 350h4"/>
        </g>
        <path d="M235 89H318M430 307L448 300 476 296 485 300 480 306" stroke="#fff" stroke-width="3" fill="none"/>
      </g>
      <g class="pts">
        <circle cx="775" cy="374" r="4.600"/><circle cx="799" cy="395" r="4.600"/><circle cx="801" cy="396" r="4.600"/><circle cx="805" cy="402" r="4.600"/><circle cx="836" cy="390" r="4.600"/><circle cx="858" cy="382" r="4.600"/><circle cx="851" cy="380" r="4.600"/><circle cx="838" cy="425" r="4.600"/><circle cx="889" cy="402" r="4.600"/><circle cx="898" cy="397" r="4.600"/><circle cx="926" cy="445" r="4.600"/><circle cx="1195" cy="432" r="4.600"/><circle cx="1158" cy="464" r="4.600"/><circle cx="1094" cy="471" r="4.600"/><circle cx="1088" cy="499" r="4.600"/><circle cx="1085" cy="538" r="4.600"/><circle cx="813" cy="531" r="4.600"/><circle cx="855" cy="527" r="4.600"/><circle cx="887" cy="540" r="4.600"/><circle cx="891" cy="548" r="4.600"/><circle cx="900" cy="550" r="4.600"/><circle cx="892" cy="576" r="4.600"/><circle cx="886" cy="592" r="4.600"/><circle cx="589" cy="519" r="4.600"/><circle cx="621" cy="532" r="4.600"/><circle cx="659" cy="638" r="4.600"/><circle cx="1194" cy="648" r="4.600"/>
        <circle cx="487" cy="419" r="4.600"/><circle cx="497" cy="415" r="4.600"/><circle cx="512" cy="420" r="4.600"/><circle cx="506" cy="428" r="4.600"/><circle cx="496" cy="443" r="4.600"/><circle cx="519" cy="435" r="4.600"/><circle cx="516" cy="438" r="4.600"/><circle cx="552" cy="412" r="4.600"/><circle cx="549" cy="408" r="4.600"/><circle cx="569" cy="429" r="4.600"/><circle cx="577" cy="433" r="4.600"/><circle cx="580" cy="421" r="4.600"/><circle cx="588" cy="436" r="4.600"/><circle cx="588" cy="432" r="4.600"/><circle cx="596" cy="426" r="4.600"/><circle cx="605" cy="431" r="4.600"/><circle cx="603" cy="422" r="4.600"/><circle cx="599" cy="435" r="4.600"/><circle cx="610" cy="426" r="4.600"/><circle cx="615" cy="437" r="4.600"/><circle cx="627" cy="431" r="4.600"/><circle cx="619" cy="432" r="4.600"/><circle cx="621" cy="431" r="4.600"/>
      </g>
    </svg>
  </main>
  <footer class="status">
    <div class="locate"><svg viewBox="0 0 14 14"><circle cx="5.500" cy="5.500" r="4.200" fill="none" stroke="#999" stroke-width="1.300"/><path d="M8.500 8.500l4.500 4.500" stroke="#999" stroke-width="1.700"/></svg><span>Type to locate (Ctrl+K)</span></div>
    <span class="l-coord">Coordinate</span><div class="field coord">-180.6,35.5</div>
    <svg class="mouse" viewBox="0 0 20 20"><g fill="#fff" stroke="#222" stroke-width="1.700"><ellipse cx="4" cy="6" rx="2" ry="4.500" transform="rotate(-35 4 6)"/><ellipse cx="7.500" cy="5" rx="2" ry="4.500" transform="rotate(-30 7.500 5)"/><ellipse cx="11" cy="5.500" rx="2" ry="4.500" transform="rotate(-25 11 5.500)"/></g><path d="M3 10l9-1 4 3v5l-4 2-6-3z" fill="#222"/><circle cx="12.500" cy="14.500" r="3.500" fill="#fff" stroke="#222" stroke-width="1.500"/><circle cx="12.500" cy="14.500" r="1.300" fill="#222"/><path d="M13 4q3-1 5-3" fill="none" stroke="#222" stroke-width="1.500" stroke-dasharray="2 1.500"/></svg>
    <span class="l-scale">Scale</span><div class="field scale"><span>148607808</span><i class="drop"></i></div>
    <svg class="lock" viewBox="0 0 16 19"><path d="M3.500 9V6a4.500 4.500 0 0 1 9 0v3" fill="none" stroke="#999" stroke-width="2"/><rect y="8.500" width="16" height="10" rx="1" fill="#666"/></svg>
    <span class="l-mag">Magnifier</span><div class="field spin mag"><span>100%</span><i></i></div>
    <span class="l-rot">Rotation</span><div class="field spin rot"><span>0.0 °</span><i></i></div>
    <svg class="render"><use href="#check"/></svg><span class="l-ren">Render</span>
    <svg class="globe" viewBox="0 0 20 18"><g fill="none" stroke="#777"><circle cx="10" cy="9" r="8" fill="#ddd"/><ellipse cx="10" cy="9" rx="4" ry="8"/><path d="M10 1v16M4 3.500h12M3 13.500h14"/></g><path d="M0 8q1-2 2-2h16q1 0 2 2l-1 1H1z" fill="#888"/></svg>
    <span class="l-epsg">EPSG:4326</span>
    <svg class="chat" viewBox="0 0 20 19"><path d="M10 0C17 0 20 3 20 7.500 20 10 19 12 17 13.500l2 5-6-3.500H10C4 15 0 12 0 7.500S4 0 10 0z" fill="#636363"/><circle cx="5.500" cy="7.500" r="1.400" fill="#eee"/><circle cx="10" cy="7.500" r="1.400" fill="#eee"/><circle cx="14.500" cy="7.500" r="1.400" fill="#eee"/></svg>
    <svg class="grab" viewBox="0 0 10 12"><path d="M9 1v1M9 4v1M6 4v1M9 7v1M6 7v1M3 7v1M9 10v1M6 10v1M3 10v1M0 10v1" stroke="#aaa"/></svg>
  </footer>
</div>
</body>
</html>
```
FILE: styles.css
```css
* { box-sizing: border-box; }
body {
  margin: 0; width: 1217px; height: 827px; overflow: hidden;
  padding: 1px 1px 0 2px;
  background:
    linear-gradient(90deg, #3a2c22, #6b5a2c 30%, #7a6a30 60%, #5a4226) 0 0 / 100% 1px no-repeat,
    linear-gradient(#6e6330, #4a4a28 50%, #7d6c30) 100% 0 / 1px 100% no-repeat,
    linear-gradient(#1c1c14 0 38%, #6a4c1c 42%, #b08a20 45%, #34281a 48%, #18130c 57%, #a86820 59%, #32260f 62%, #1f1a10 80%, #8d4a1c 95%, #4d6030);
  font-family: "Open Sans", "Noto Sans", sans-serif; color: #000;
}
.defs { position: absolute; }
i, b { font-style: normal; font-weight: normal; }
.glyph { font-family: "Open Sans", sans-serif; }
.b { font-weight: bold; }
.ser { font-family: "Liberation Serif", serif; font-style: italic; font-weight: bold; }
.ser2 { font-family: "Liberation Serif", serif; }
.window { width: 1214px; height: 826px; background: #efefef; display: flex; flex-direction: column; }
.titlebar { height: 37px; flex: none; background: #fff; display: flex; align-items: center; padding: 0 0 2px 9px; }
.logo { width: 20px; height: 20px; margin-top: 1px; }
.title { margin-left: 5px; font-size: 15px; color: #858585; letter-spacing: -.4px; }
.controls { width: 140px; height: 20px; margin-left: auto; margin-right: 13px; }
.menu {
  height: 25px; flex: none; display: grid; padding: 0 0 0 11px; border-bottom: 1px solid #d0d0d0;
  grid-template-columns: 61px 41px 47px 50px 68px 62px 57px 56px 77px 46px 50px 85px auto;
  font-size: 15px; line-height: 24px; color: #969696; letter-spacing: -.35px; white-space: nowrap;
}
.menu u { text-underline-offset: 2px; text-decoration-thickness: 1px; }
.toolbar { height: 39px; flex: none; display: flex; align-items: center; padding-left: 6px; background: linear-gradient(#fbfbfb, #ededed); border-bottom: 1px solid #b4b4b4; }
.toolbar.last { height: 38px; }
.grip { flex: none; width: 5px; height: 19px; margin-right: 3px; background: radial-gradient(circle, #aaa .6px, transparent .9px) 0 0 / 2.500px 3px; }
.grip.mid { margin: 0 4px 0 9px; }
.grip.tight { margin: 0 3px 0 10px; }
.grip.edit { margin: 0 4px 0 8px; }
.grip.label { margin: 0 4px 0 9px; }
.grip.plug { margin: 0 4px 0 9px; }
.btn { flex: none; width: 33px; height: 31px; display: flex; align-items: center; justify-content: flex-start; padding-left: 5px; }
.btn svg { width: 24px; height: 24px; overflow: visible; }
.btn.on { background: #dadada; border: 1px solid #a8a8a8; border-radius: 2px; padding-left: 5px; }
.btn.chip, .btn.chart { padding-left: 6px; }
.off svg, svg.dim { opacity: .33; }
.drop { flex: none; width: 15px; height: 5px; background: #505050; clip-path: polygon(3px 0, 12px 0, 7.500px 5px); }
.drop.off { opacity: .5; }
.sep { flex: none; width: 8px; height: 19px; background: linear-gradient(#d0d0d0, #d0d0d0) 4px 0 / 1px 100% no-repeat; }
.sep.wide { width: 9px; }
.work { flex: 1; min-height: 0; display: flex; }
.docks { width: 311px; display: flex; flex-direction: column; flex: none; }
.dock { display: flex; flex-direction: column; }
.browser { height: 203px; }
.layers { flex: 1; }
.dock-title { height: 23px; display: flex; align-items: center; padding: 0 1px 0 4px; font-size: 14px; }
.dock-title span { flex: 1; letter-spacing: -.2px; }
.dock-title svg { width: 11px; height: 11px; margin-left: 3px; margin-top: -2px; }
.dock-tools { height: 28px; display: flex; align-items: center; gap: 9px; padding: 0 0 4px 8px; }
.dock-tools svg { width: 16px; height: 16px; }
.dock-tools .drop { width: 15px; margin: 0 -4px 0 -5px; }
.tree { flex: 1; display: flex; background: #fff; border: 1px solid #b4b4b4; overflow: hidden; min-height: 0; }
.tree ul { flex: 1; list-style: none; margin: 0; padding: 0; font-size: 14px; letter-spacing: .02px; }
.tree li { height: 22px; display: flex; align-items: center; padding-left: 8px; }
.tree li.child { padding-left: 33px; }
.tree li svg { width: 20px; height: 18px; margin: 0 6px 0 11px; }
.tree li.child svg { margin-left: 11px; }
.tree li svg.star { height: 20px; }
.tw { width: 9px; height: 10px; background: #505050; clip-path: polygon(2px 0, 7px 5px, 2px 10px); }
.tw.open { clip-path: polygon(0 2px, 9px 2px, 4.500px 7px); }
.scroll { width: 17px; border-left: 1px solid #b4b4b4; background: #e2e2e2; display: flex; flex-direction: column; }
.scroll i { background: #f8f8f8; }
.scroll .up, .scroll .down { height: 17px; border-bottom: 1px solid #b4b4b4; display: grid; place-items: center; }
.scroll .down { margin-top: auto; border-top: 1px solid #b4b4b4; border-bottom: 0; }
.scroll .up::before, .scroll .down::before { content: ""; width: 9px; height: 5px; background: #505050; clip-path: polygon(0 100%, 100% 100%, 50% 0); }
.scroll .down::before { clip-path: polygon(0 0, 100% 0, 50% 100%); }
.scroll .thumb { height: 34px; border-bottom: 1px solid #b4b4b4; background: #fcfcfc; }
.split { width: 18px; height: 3px; margin: 2px auto 1px; background: radial-gradient(circle, #aaa .6px, transparent .9px) 0 0 / 3px 3px; }
.layer-list { flex: 1; background: #fff; border: 1px solid #b4b4b4; font-size: 14px; font-weight: bold; }
.layer { height: 22px; display: flex; align-items: center; padding-left: 28px; white-space: nowrap; letter-spacing: -.07px; }
.layer .ck { width: 17px; height: 17px; }
.swatch { width: 19px; height: 19px; margin: 0 6px; border: 1px solid #444; }
.swatch.dot { width: 10px; height: 10px; border-radius: 50%; margin: 0 11px; background: #7d8b8f; }
.swatch.lakes { background: #beb297; }
.swatch.admin { background: #e3b333; }
.docks { width: 311px; }
.vsplit { flex: none; width: 7px; background: radial-gradient(circle, #aaa .6px, transparent .9px) 3px 301px / 3px 3px; clip-path: inset(301px 2px 296px 2px); }
.canvas { width: 896px; height: 615px; margin-top: 1px; border: 1px solid #b4b4b4; background: #fff; flex: none; }
.pts circle { fill: #7d8b8f; stroke: #232323; stroke-width: .8; }
.docks { width: 311px; }
.work { padding-right: 0; }
.docks, .vsplit { margin: 0; }
.docks { flex: 0 0 311px; }
.status { height: 32px; flex: none; display: flex; align-items: center; padding-left: 4px; font-family: "DejaVu Sans Condensed", "DejaVu Sans", "Noto Sans", sans-serif; font-stretch: condensed; font-size: 12px; letter-spacing: .27px; white-space: nowrap; }
.status span, .status .field { flex: none; }
.locate { width: 232px; height: 24px; border: 1px solid #aaa; border-radius: 3px; background: #fff; display: flex; align-items: center; padding-left: 8px; color: #777; font-size: 12.500px; letter-spacing: .13px; flex: none; }
.locate svg { width: 13px; height: 13px; margin-right: 7px; }
.field { height: 24px; border: 1px solid #a8a8a8; border-radius: 3px; background: #fff; display: flex; align-items: center; }
.l-coord { width: 65px; margin-left: 83px; }
.coord { width: 81px; padding-left: 6px; letter-spacing: .45px; }
.mouse { width: 20px; height: 20px; margin-left: 4px; flex: none; }
.l-scale { width: 34px; margin-left: 13px; }
.scale { width: 93px; padding-left: 1px; letter-spacing: .1px; }
.scale .drop { width: 25px; height: 22px; margin-left: auto; clip-path: polygon(6px 8px, 16px 8px, 11px 13px); }
.lock { width: 16px; height: 19px; margin-left: 12px; flex: none; }
.l-mag { width: 56px; margin-left: 9px; }
.spin { padding-left: 4px; }
.spin i { width: 17px; height: 100%; margin-left: auto; border-left: 1px solid #a8a8a8; display: flex; flex-direction: column; align-items: center; justify-content: center; gap: 4px; }
.spin i::before, .spin i::after { content: ""; width: 9px; height: 5px; background: #505050; clip-path: polygon(0 100%, 100% 100%, 50% 0); }
.spin i::after { clip-path: polygon(0 0, 100% 0, 50% 100%); }
.mag { width: 93px; }
.l-rot { width: 47px; margin-left: 9px; }
.rot { width: 89px; margin-left: 9px; }
.render { width: 17px; height: 17px; margin-left: 6px; flex: none; }
.l-ren { width: 50px; margin-left: 6px; }
.globe { width: 20px; height: 18px; margin-left: 8px; flex: none; }
.l-epsg { width: 63px; margin-left: 4px; }
.chat { width: 20px; height: 19px; margin-left: 21px; flex: none; }
.grab { width: 10px; height: 12px; margin: 14px 0 0 auto; flex: none; }
```
